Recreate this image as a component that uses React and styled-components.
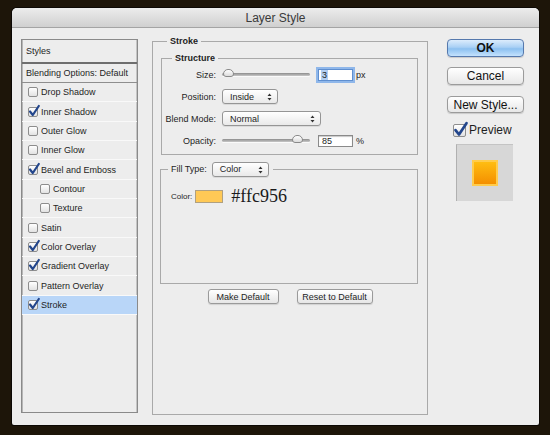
import React from "react";
import styled, { createGlobalStyle } from "styled-components";

const Global = createGlobalStyle`
  html, body { margin: 0; padding: 0; }
  body {
    background: #1d1509;
    font-family: "Liberation Sans", Arial, sans-serif;
    color: #1e1e1e;
    width: 550px;
    height: 435px;
    overflow: hidden;
  }
`;

const Page = styled.div`
  padding: 8px 11px 0 12px;
`;

const Window = styled.div`
  width: 527px;
  height: 417px;
  background: #ededed;
  border-radius: 5px 5px 2px 2px;
  box-shadow: 0 0 0 1px #0c0804;
  display: flex;
  flex-direction: column;
  overflow: hidden;
`;

const TitleBar = styled.div`
  height: 19px;
  flex: none;
  background: linear-gradient(#ececec, #d0d0d0);
  border-bottom: 1px solid #a4a4a4;
  display: flex;
  align-items: center;
  justify-content: center;
  font-size: 12px;
  color: #3a3a3a;
`;

const Body = styled.div`
  display: flex;
  align-items: flex-start;
  padding: 7px 0 0 9px;
`;

/* ---------- left list ---------- */
const List = styled.div`
  margin-top: 4px;
  width: 115px;
  height: 372px;
  border: 1px solid #8a8a8a;
  box-shadow: inset 1px 0 0 #b6b6b6, inset -1px 0 0 #c4c4c4;
  background: #ededed;
  font-size: 9px;
  flex: none;
`;

const ListHeader = styled.div`
  height: 24px;
  box-sizing: border-box;
  border-bottom: 2px solid #6e6e6e;
  display: flex;
  align-items: center;
  padding-left: 4px;
`;

const ListMain = styled.div`
  height: 19px;
  box-sizing: border-box;
  border-bottom: 1px solid #8e8e8e;
  display: flex;
  align-items: center;
  padding-left: 4px;
`;

const ListRow = styled.div`
  height: 19.35px;
  box-sizing: border-box;
  border-bottom: 1px solid #f9f9f9;
  display: flex;
  align-items: center;
  gap: 3px;
  padding-left: ${(p) => (p.$indent ? 18 : 6)}px;
  background: ${(p) => (p.$active ? "#b9d6f8" : "transparent")};
`;

const Box = styled.span`
  position: relative;
  width: ${(p) => p.$size}px;
  height: ${(p) => p.$size}px;
  box-sizing: border-box;
  border: 1px solid #8d8d8d;
  border-radius: 2px;
  background: linear-gradient(#ffffff, #e2e2e2);
  flex: none;
`;

const Tick = styled.svg`
  position: absolute;
  left: -1px;
  top: -3px;
  overflow: visible;
`;

const Check = ({ checked, size = 10 }) => (
  <Box $size={size}>
    {checked && (
      <Tick width={size + 2} height={size + 2} viewBox="0 0 12 12">
        <path
          d="M2 6.5 L4.8 10 L10.8 1"
          fill="none"
          stroke="#23468c"
          strokeWidth="2.2"
          strokeLinecap="round"
          strokeLinejoin="round"
        />
      </Tick>
    )}
  </Box>
);

/* ---------- group boxes ---------- */
const Group = styled.fieldset`
  margin: 0;
  padding: 0;
  border: 1px solid #a9a9a9;
  min-width: 0;
  box-sizing: border-box;
`;

const Outer = styled(Group)`
  width: 276px;
  height: 380px;
  margin-left: 14px;
  flex: none;
  padding: 0 8px 0 8px;
`;

const Legend = styled.legend`
  margin-left: ${(p) => p.$ml}px;
  padding: 0 3px;
  font-size: 9px;
  font-weight: bold;
  line-height: 12px;
  display: flex;
  align-items: center;
  gap: 5px;
`;

const FillLegend = styled(Legend)`
  font-weight: normal;
  line-height: 15px;
  padding: 0 4px 0 3px;
`;

const Structure = styled(Group)`
  margin-top: 5px;
  width: 257px;
  padding: 3px 0 6px 0;
`;

const Grid = styled.div`
  display: grid;
  grid-template-columns: 54px auto;
  column-gap: 6px;
  row-gap: 7px;
  grid-auto-rows: 15px;
  font-size: 9px;
`;

const Label = styled.div`
  text-align: right;
  align-self: center;
`;

const Ctl = styled.div`
  display: flex;
  align-items: center;
  gap: 0;
`;

const Track = styled.div`
  position: relative;
  width: 88px;
  height: 3px;
  border-radius: 2px;
  background: linear-gradient(#8c8c8c, #c8c8c8);
  box-shadow: 0 1px 0 #fafafa;
  margin-right: 8px;
`;

const Thumb = styled.div`
  position: absolute;
  top: -4px;
  left: ${(p) => p.$at}px;
  width: 11px;
  height: 8px;
  box-sizing: border-box;
  border: 1px solid #8a8a8a;
  border-radius: 5px 5px 3px 3px;
  background: linear-gradient(#ffffff, #dcdcdc);
`;

const NumInput = styled.div`
  width: 35px;
  height: 12px;
  box-sizing: border-box;
  border: 1px solid ${(p) => (p.$focus ? "#5f8fd0" : "#8a8a8a")};
  box-shadow: ${(p) => (p.$focus ? "0 0 0 2px #8fb7ea" : "inset 0 1px 1px #c8c8c8")};
  background: #fff;
  font-size: 9px;
  line-height: 10px;
  padding-left: 2px;
  display: flex;
  align-items: center;
`;

const Sel = styled.span`
  background: ${(p) => (p.$on ? "#b3cff3" : "transparent")};
  padding: 0 1px;
`;

const Unit = styled.span`
  margin-left: 3px;
  font-size: 9px;
`;

const Drop = styled.div`
  width: ${(p) => p.$w}px;
  height: 15px;
  box-sizing: border-box;
  border: 1px solid #959595;
  border-radius: 3px;
  background: linear-gradient(#ffffff, #e9e9e9);
  box-shadow: 0 1px 0 rgba(0, 0, 0, 0.08);
  display: flex;
  align-items: center;
  justify-content: space-between;
  padding: 0 5px 0 7px;
  font-size: 9px;
  font-weight: normal;
`;

const Arrows = styled.svg`
  flex: none;
`;

const Dropdown = ({ w, children }) => (
  <Drop $w={w}>
    <span>{children}</span>
    <Arrows width="5" height="8" viewBox="0 0 5 8">
      <path d="M0.5 3 L2.5 0.5 L4.5 3 Z M0.5 5 L2.5 7.5 L4.5 5 Z" fill="#333" />
    </Arrows>
  </Drop>
);

const Fill = styled(Group)`
  margin-top: 7px;
  width: 258px;
  margin-left: -1px;
  height: 122px;
  padding: 11px 0 0 10px;
`;

const ColorRow = styled.div`
  display: flex;
  align-items: center;
  gap: 3px;
  font-size: 8px;
`;

const Swatch = styled.div`
  width: 28px;
  height: 13px;
  box-sizing: border-box;
  border: 1px solid #b0a080;
  background: #ffc956;
  margin-right: 5px;
`;

const Hex = styled.span`
  font-family: "Liberation Serif", "Times New Roman", serif;
  font-size: 18px;
  color: #1a1a1a;
  line-height: 16px;
`;

const ButtonRow = styled.div`
  display: flex;
  justify-content: center;
  gap: 18px;
  margin-top: 5px;
`;

const SmallBtn = styled.div`
  width: ${(p) => p.$w}px;
  height: 15px;
  box-sizing: border-box;
  border: 1px solid #9a9a9a;
  border-radius: 3px;
  background: linear-gradient(#ffffff, #e6e6e6);
  box-shadow: 0 1px 1px rgba(0, 0, 0, 0.12);
  display: flex;
  align-items: center;
  justify-content: center;
  font-size: 9px;
`;

/* ---------- right column ---------- */
const Side = styled.div`
  margin: 4px 0 0 19px;
  width: 77px;
  display: flex;
  flex-direction: column;
  align-items: flex-start;
  flex: none;
`;

const Btn = styled.div`
  width: 77px;
  height: ${(p) => p.$h || 18}px;
  box-sizing: border-box;
  margin-bottom: ${(p) => p.$mb}px;
  border: 1px solid ${(p) => (p.$primary ? "#5679ad" : "#9b9b9b")};
  border-radius: 4px;
  background: ${(p) =>
    p.$primary
      ? "linear-gradient(#dcecfc 0%, #a9d0f5 45%, #8cc0f0 55%, #c4e2fd 100%)"
      : "linear-gradient(#ffffff, #e7e7e7)"};
  box-shadow: 0 1px 1px rgba(0, 0, 0, 0.15);
  display: flex;
  align-items: center;
  justify-content: center;
  font-size: 12px;
  font-weight: ${(p) => (p.$primary ? "bold" : "normal")};
  color: #111;
`;

const PreviewRow = styled.label`
  display: flex;
  align-items: center;
  gap: 3px;
  font-size: 12px;
  margin-left: 6px;
  height: 14px;
`;

const Thumb2 = styled.div`
  margin-top: 7px;
  margin-left: 9px;
  width: 57px;
  height: 57px;
  box-sizing: border-box;
  background: #d7d7d7;
  border-left: 1px solid #b0b0b0;
  border-top: 1px solid #c4c4c4;
  display: flex;
  align-items: center;
  justify-content: center;
`;

const Square = styled.div`
  width: 26px;
  height: 26px;
  box-sizing: border-box;
  border: 2px solid #ffcc4c;
  background: linear-gradient(#ffbd12, #f48f00);
`;

const items = [
  { name: "Drop Shadow" },
  { name: "Inner Shadow", on: true },
  { name: "Outer Glow" },
  { name: "Inner Glow" },
  { name: "Bevel and Emboss", on: true },
  { name: "Contour", indent: true },
  { name: "Texture", indent: true },
  { name: "Satin" },
  { name: "Color Overlay", on: true },
  { name: "Gradient Overlay", on: true },
  { name: "Pattern Overlay" },
  { name: "Stroke", on: true, active: true },
];

export default function App() {
  return (
    <>
      <Global />
      <Page>
        <Window>
          <TitleBar>Layer Style</TitleBar>
          <Body>
            <List>
              <ListHeader>Styles</ListHeader>
              <ListMain>Blending Options: Default</ListMain>
              {items.map((it) => (
                <ListRow key={it.name} $indent={it.indent} $active={it.active}>
                  <Check checked={it.on} />
                  <span>{it.name}</span>
                </ListRow>
              ))}
            </List>

            <Outer>
              <Legend $ml={6}>Stroke</Legend>
              <Structure>
                <Legend $ml={10}>Structure</Legend>
                <Grid>
                  <Label>Size:</Label>
                  <Ctl>
                    <Track>
                      <Thumb $at={1} />
                    </Track>
                    <NumInput $focus>
                      <Sel $on>3</Sel>
                    </NumInput>
                    <Unit>px</Unit>
                  </Ctl>
                  <Label>Position:</Label>
                  <Ctl>
                    <Dropdown w={56}>Inside</Dropdown>
                  </Ctl>
                  <Label>Blend Mode:</Label>
                  <Ctl>
                    <Dropdown w={99}>Normal</Dropdown>
                  </Ctl>
                  <Label>Opacity:</Label>
                  <Ctl>
                    <Track>
                      <Thumb $at={70} />
                    </Track>
                    <NumInput>
                      <Sel>85</Sel>
                    </NumInput>
                    <Unit>%</Unit>
                  </Ctl>
                </Grid>
              </Structure>

              <Fill>
                <FillLegend $ml={-3}>
                  Fill Type:
                  <Dropdown w={57}>Color</Dropdown>
                </FillLegend>
                <ColorRow>
                  Color:
                  <Swatch />
                  <Hex>#ffc956</Hex>
                </ColorRow>
              </Fill>

              <ButtonRow>
                <SmallBtn $w={71}>Make Default</SmallBtn>
                <SmallBtn $w={76}>Reset to Default</SmallBtn>
              </ButtonRow>
            </Outer>

            <Side>
              <Btn $primary $mb={10}>OK</Btn>
              <Btn $mb={11}>Cancel</Btn>
              <Btn $mb={10} $h={17}>New Style...</Btn>
              <PreviewRow>
                <Check checked size={13} />
                Preview
              </PreviewRow>
              <Thumb2>
                <Square />
              </Thumb2>
            </Side>
          </Body>
        </Window>
      </Page>
    </>
  );
}
